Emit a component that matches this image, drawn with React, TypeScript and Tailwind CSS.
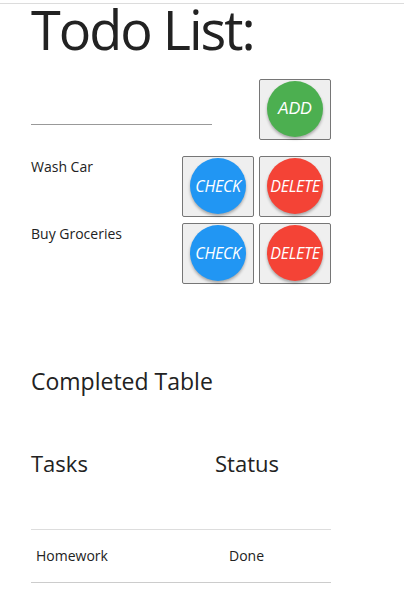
import React from "react";

function CircleBtn({ label, color, font }: { label: string; color: string; font?: string }) {
  return (
    <button className="w-[72px] h-[61px] flex items-center justify-center rounded-[2px] border border-[#767676] bg-[#efefef]">
      <span
        className={`w-[56px] h-[56px] rounded-full flex items-center justify-center text-white italic shadow-[0_2px_3px_rgba(0,0,0,0.3)] ${color} ${font ?? "text-[16px] tracking-[-0.3px]"}`}
      >
        {label}
      </span>
    </button>
  );
}

export default function App() {
  const rows = ["Wash Car", "Buy Groceries"];
  return (
    <div className="w-[404px] h-[602px] bg-white text-[#222] font-['Open_Sans',sans-serif] overflow-hidden">
      <div className="h-[3px]" />
      <div className="border-t border-[#dcdcdc] px-[31px]">
        <h1 className="text-[54px] leading-[1.1] mt-[-4px] tracking-[-2px] text-[#222]">Todo List:</h1>
        <div className="grid grid-cols-[146px_72px_72px] gap-x-[5px] mt-[19.6px]">
          <div className="flex items-end pb-[15px]">
            <div className="w-[181px] shrink-0 border-b border-[#999] h-[1px]" />
          </div>
          <div />
          <CircleBtn label="ADD" color="bg-[#4caf50]" font="font-['Liberation_Sans',sans-serif] text-[16px]" />
        </div>
        <div className="mt-[16px] flex flex-col gap-[6px]">
          {rows.map((r) => (
            <div key={r} className="grid grid-cols-[146px_72px_72px] gap-x-[5px]">
              <div className="text-[14px] leading-[20px] pt-[1px]">{r}</div>
              <CircleBtn label="CHECK" color="bg-[#2196f3]" />
              <CircleBtn label="DELETE" color="bg-[#f44336]" />
            </div>
          ))}
        </div>
        <h2 className="text-[23px] leading-[30px] mt-[82px]">Completed Table</h2>
        <div className="w-[300px] mt-[52px]">
          <div className="grid grid-cols-[184px_1fr] text-[22px] leading-[30px]">
            <div>Tasks</div>
            <div>Status</div>
          </div>
          <div className="mt-[51px] border-t border-[#dddddd] border-b border-b-[#cccccc] grid grid-cols-[193px_1fr] h-[54px] items-center text-[14px] pl-[5px]">
            <div>Homework</div>
            <div>Done</div>
          </div>
        </div>
      </div>
    </div>
  );
}
